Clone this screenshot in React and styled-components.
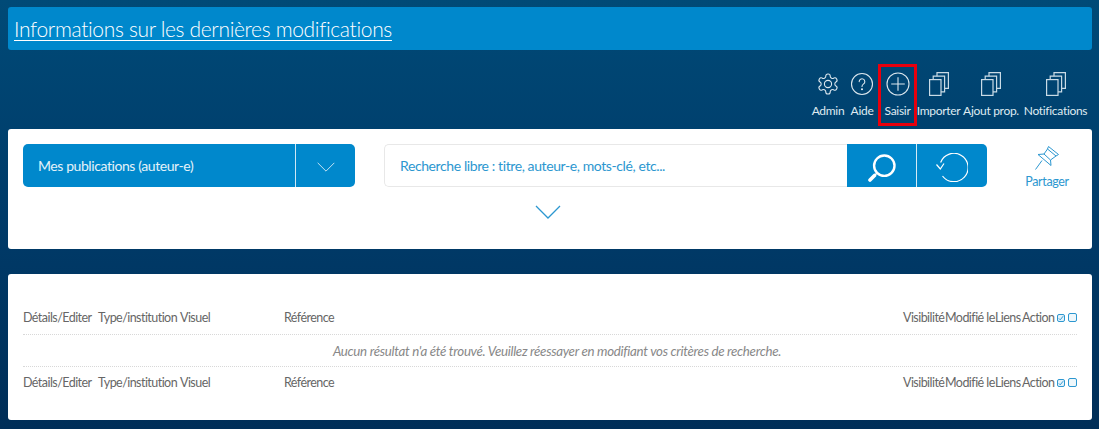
import React from "react";
import styled, { createGlobalStyle } from "styled-components";

const GlobalStyle = createGlobalStyle`
  html, body {
    margin: 0;
    padding: 0;
  }
  body {
    min-height: 429px;
    overflow: hidden;
    background: linear-gradient(180deg, #004a77 0%, #003b69 50%, #002e58 100%);
    font-family: "Lato", "Open Sans", sans-serif;
  }
`;

const tools = [
  { label: "Admin", icon: "gear", width: 36 },
  { label: "Aide", icon: "help", width: 32 },
  { label: "Saisir", icon: "plus", width: 39, active: true },
  { label: "Importer", icon: "pages", width: 43 },
  { label: "Ajout prop.", icon: "pages", width: 62 },
  { label: "Notifications", icon: "pages", width: 67 },
];

const GearIcon = () => (
  <svg width="24" height="24" viewBox="0 0 24 24" fill="none" stroke="#dbe7ee" strokeWidth="1.1" strokeLinejoin="round">
    <path d="M12.22 2h-.44a2 2 0 0 0-2 2v.18a2 2 0 0 1-1 1.73l-.43.25a2 2 0 0 1-2 0l-.15-.08a2 2 0 0 0-2.73.73l-.22.38a2 2 0 0 0 .73 2.73l.15.1a2 2 0 0 1 1 1.72v.51a2 2 0 0 1-1 1.74l-.15.09a2 2 0 0 0-.73 2.73l.22.38a2 2 0 0 0 2.73.73l.15-.08a2 2 0 0 1 2 0l.43.25a2 2 0 0 1 1 1.73V20a2 2 0 0 0 2 2h.44a2 2 0 0 0 2-2v-.18a2 2 0 0 1 1-1.73l.43-.25a2 2 0 0 1 2 0l.15.08a2 2 0 0 0 2.73-.73l.22-.39a2 2 0 0 0-.73-2.73l-.15-.08a2 2 0 0 1-1-1.74v-.5a2 2 0 0 1 1-1.74l.15-.09a2 2 0 0 0 .73-2.73l-.22-.38a2 2 0 0 0-2.73-.73l-.15.08a2 2 0 0 1-2 0l-.43-.25a2 2 0 0 1-1-1.73V4a2 2 0 0 0-2-2z" />
    <circle cx="12" cy="12" r="3.6" />
  </svg>
);

const HelpIcon = () => (
  <svg width="24" height="24" viewBox="0 0 24 24" fill="none" stroke="#dbe7ee" strokeWidth="1.1" strokeLinecap="round">
    <circle cx="12" cy="12" r="10.5" />
    <path d="M9.2 9.6a2.8 2.8 0 1 1 4.4 2.3c-1 .7-1.6 1.3-1.6 2.6" />
    <circle cx="12" cy="17.3" r="0.5" fill="#dbe7ee" />
  </svg>
);

const PlusIcon = () => (
  <svg width="24" height="24" viewBox="0 0 24 24" fill="none" stroke="#dbe7ee" strokeWidth="1.1">
    <circle cx="12" cy="12" r="11" />
    <path d="M12 5.2v13.6M5.2 12h13.6" />
  </svg>
);

const PagesIcon = () => (
  <svg width="20" height="24" viewBox="0 0 20 24" fill="none" stroke="#c9dbe6" strokeWidth="1.2">
    <rect x="0.6" y="7.6" width="11.4" height="15.8" />
    <path d="M4.2 7.6V4.2h11.4v15.6H12" />
    <path d="M8 4.2V.6h11.4v15.8h-3.8" />
  </svg>
);

const toolIcons = { gear: GearIcon, help: HelpIcon, plus: PlusIcon, pages: PagesIcon };

const ChevronDown = ({ width, height, color }) => (
  <svg width={width} height={height} viewBox="0 0 26 14" fill="none" stroke={color} strokeWidth="1.3">
    <path d="M1 1l12 12L25 1" />
  </svg>
);

const SearchIcon = () => (
  <svg width="28" height="28" viewBox="0 0 28 28" fill="none" stroke="#fff">
    <circle cx="16.3" cy="11.7" r="10.2" strokeWidth="2.4" />
    <path d="M9 19L6.5 21.5" strokeWidth="1.6" />
    <path d="M6.5 21.5L2 26" strokeWidth="3.6" strokeLinecap="round" />
  </svg>
);

const ResetIcon = () => (
  <svg width="32" height="29" viewBox="0 0 32 29" fill="none" stroke="#fff" strokeWidth="1.2">
    <path d="M4.6 9.5A14.2 14.2 0 1 1 6.5 23" />
    <path d="M.5 11.5L4.300 16 8 10.500" />
  </svg>
);

const PinIcon = () => (
  <svg width="25" height="24" viewBox="0 0 25 24" fill="none" stroke="#2c97d0" strokeWidth="1" strokeLinejoin="round">
    <path d="M13.5.5l10 8-2.5 1.500-8.500-7z" />
    <path d="M12.500 3L9 8M21 10l-5.500 4" />
    <path d="M3 8.500L9 8l6.500 6 .5 5.500z" />
    <path d="M7 14.500L.5 23.500" />
  </svg>
);

const SmallCheck = ({ checked }) => (
  <Check $size={checked ? 8 : 9} $checked={checked}>
    {checked && (
      <svg width="6" height="6" viewBox="0 0 7 7" fill="none" stroke="#2c97d0" strokeWidth="1.1">
        <path d="M1 4l1.600 1.600L6 1.400" />
      </svg>
    )}
  </Check>
);

const HeadRow = ({ height }) => (
  <TableRow $height={height}>
    <Cell>Détails/Editer</Cell>
    <Cell>Type/institution</Cell>
    <Cell>Visuel</Cell>
    <Cell>Référence</Cell>
    <Cell>Visibilité</Cell>
    <Cell>Modifié le</Cell>
    <Cell>Liens</Cell>
    <Cell>Action</Cell>
    <Checks>
      <SmallCheck checked />
      <SmallCheck />
    </Checks>
  </TableRow>
);

export default function App() {
  return (
    <Page>
      <GlobalStyle />
      <Banner>
        <BannerLink href="#">Informations sur les dernières modifications</BannerLink>
      </Banner>

      <Toolbar>
        {tools.map((tool) => {
          const Icon = toolIcons[tool.icon];
          return (
            <Tool key={tool.label} $width={tool.width} $active={tool.active}>
              <ToolIcon>
                <Icon />
              </ToolIcon>
              <ToolLabel>{tool.label}</ToolLabel>
            </Tool>
          );
        })}
      </Toolbar>

      <SearchPanel>
        <SearchRow>
          <SelectBox>
            <SelectText>Mes publications (auteur-e)</SelectText>
            <SelectArrow>
              <ChevronDown width={18} height={10} color="#d8ecf7" />
            </SelectArrow>
          </SelectBox>
          <SearchGroup>
            <SearchInput>Recherche libre : titre, auteur-e, mots-clé, etc...</SearchInput>
            <SearchButton>
              <SearchIcon />
            </SearchButton>
            <ResetButton>
              <ResetIcon />
            </ResetButton>
          </SearchGroup>
          <ShareLink>
            <PinIcon />
            <ShareLabel>Partager</ShareLabel>
          </ShareLink>
        </SearchRow>
        <ExpandRow>
          <ChevronDown width={26} height={14} color="#2c97d0" />
        </ExpandRow>
      </SearchPanel>

      <TablePanel>
        <HeadRow height={33} />
        <EmptyRow>Aucun résultat n'a été trouvé. Veuillez réessayer en modifiant vos critères de recherche.</EmptyRow>
        <HeadRow height={31} />
      </TablePanel>
    </Page>
  );
}

const Page = styled.div`
  display: flex;
  flex-direction: column;
  padding: 7px 7px 0 8px;
`;

const Banner = styled.div`
  height: 43px;
  display: flex;
  align-items: center;
  padding-left: 6px;
  background: #0088cc;
  border-radius: 3px;
`;

const BannerLink = styled.a`
  color: #fff;
  font-size: 21px;
  font-weight: 300;
  letter-spacing: -0.34px;
  text-decoration: underline;
  text-underline-offset: 3px;
  text-decoration-thickness: 1px;
`;

const Toolbar = styled.div`
  height: 79px;
  display: flex;
  justify-content: flex-end;
  align-items: flex-start;
  padding-right: 3px;
`;

const Tool = styled.div`
  box-sizing: border-box;
  width: ${(p) => p.$width}px;
  height: 62px;
  margin-top: 14px;
  display: flex;
  flex-direction: column;
  align-items: center;
  flex-shrink: 0;
  outline: ${(p) => (p.$active ? "3px solid #e8000d" : "none")};
  outline-offset: -3px;
`;

const ToolIcon = styled.div`
  height: 38px;
  display: flex;
  align-items: center;
  justify-content: center;
  padding-top: 2px;
  box-sizing: border-box;
`;

const ToolLabel = styled.span`
  margin-top: 1px;
  color: #dfeaf1;
  font-size: 12px;
  letter-spacing: -0.3px;
  white-space: nowrap;
`;

const SearchPanel = styled.div`
  height: 120px;
  box-sizing: border-box;
  padding: 15px 15px 0;
  background: #fff;
  border-radius: 3px;
`;

const SearchRow = styled.div`
  display: flex;
  align-items: flex-start;
`;

const SelectBox = styled.div`
  width: 332px;
  height: 43px;
  display: flex;
  background: #0088cc;
  border-radius: 5px;
`;

const SelectText = styled.div`
  flex: 1;
  display: flex;
  align-items: center;
  padding-left: 15px;
  color: #e4f2f9;
  font-size: 14px;
  letter-spacing: -0.42px;
`;

const SelectArrow = styled.div`
  width: 60px;
  display: flex;
  align-items: center;
  justify-content: center;
  padding-top: 3px;
  box-sizing: border-box;
  border-left: 1px solid #cfe7f4;
`;

const SearchGroup = styled.div`
  display: flex;
  margin-left: 29px;
`;

const SearchInput = styled.div`
  width: 463px;
  height: 43px;
  box-sizing: border-box;
  display: flex;
  align-items: center;
  padding-left: 15px;
  border: 1px solid #e8e8e8;
  border-right: none;
  border-radius: 5px 0 0 5px;
  color: #2c97d0;
  font-size: 14px;
  letter-spacing: -0.4px;
`;

const SearchButton = styled.div`
  width: 70px;
  height: 43px;
  box-sizing: border-box;
  display: flex;
  align-items: center;
  justify-content: center;
  padding-top: 4px;
  background: #0088cc;
  border-right: 1px solid #d5eaf5;
`;

const ResetButton = styled.div`
  width: 70px;
  height: 43px;
  box-sizing: border-box;
  display: flex;
  align-items: center;
  justify-content: center;
  padding-top: 4px;
  background: #0088cc;
  border-radius: 0 5px 5px 0;
`;

const ShareLink = styled.div`
  width: 60px;
  margin-left: 30px;
  display: flex;
  flex-direction: column;
  align-items: center;
  padding-top: 2px;
`;

const ShareLabel = styled.span`
  margin-top: 4px;
  color: #2c97d0;
  font-size: 12.5px;
  letter-spacing: -0.35px;
`;

const ExpandRow = styled.div`
  display: flex;
  justify-content: center;
  margin-top: 16px;
  padding-right: 4px;
`;

const TablePanel = styled.div`
  height: 146px;
  margin-top: 25px;
  box-sizing: border-box;
  padding: 27px 15px 0;
  background: #fff;
  border-radius: 3px;
`;

const TableRow = styled.div`
  height: ${(p) => p.$height}px;
  display: grid;
  grid-template-columns: 75px 82px 104px 1fr 42px 50px 27px 35px 20px;
  align-items: center;
  color: #666;
  font-size: 12.5px;
  letter-spacing: -0.55px;
  white-space: nowrap;
`;

const Cell = styled.div``;

const Checks = styled.div`
  display: flex;
  align-items: center;
  gap: 3px;
`;

const Check = styled.span`
  box-sizing: border-box;
  flex-shrink: 0;
  width: ${(p) => p.$size}px;
  height: ${(p) => p.$size}px;
  display: flex;
  align-items: center;
  justify-content: center;
  border: 1px solid #2c97d0;
  border-radius: 2px;
  background: ${(p) => (p.$checked ? "#e3f1f9" : "#eef7fb")};
`;

const EmptyRow = styled.div`
  height: 33px;
  display: flex;
  align-items: center;
  justify-content: center;
  box-sizing: border-box;
  padding-left: 14px;
  border-top: 1px dotted #d8d8d8;
  border-bottom: 1px dotted #d8d8d8;
  color: #888;
  font-size: 13.3px;
  font-style: italic;
  letter-spacing: -0.3px;
`;
